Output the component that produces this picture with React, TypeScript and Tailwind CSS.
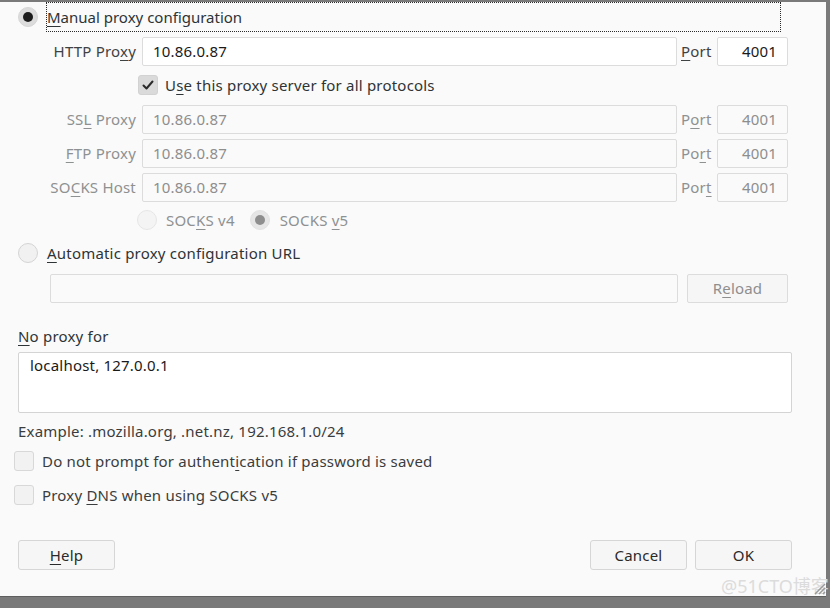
import React from "react";

const U = ({ children }: { children: React.ReactNode }) => (
  <span className="underline underline-offset-[3px] decoration-1">{children}</span>
);

type RadioProps = { checked?: boolean; disabled?: boolean };

const Radio = ({ checked, disabled }: RadioProps) => (
  <span
    className={`flex h-5 w-5 shrink-0 items-center justify-center rounded-full border ${
      checked
        ? disabled
          ? "border-[#e2e2e2] bg-[#e6e6e6]"
          : "border-[#d6d6d6] bg-[#dcdcdc]"
        : disabled
          ? "border-[#e6e6e6] bg-[#f4f4f4]"
          : "border-[#d4d4d4] bg-[#f1f1f1]"
    }`}
  >
    {checked && (
      <span className={`h-[10px] w-[10px] rounded-full ${disabled ? "bg-[#8e8e8e]" : "bg-[#1c1c1c]"}`} />
    )}
  </span>
);

const Checkbox = ({ checked }: { checked?: boolean }) => (
  <span
    className={`flex h-5 w-5 shrink-0 items-center justify-center rounded-[3px] border ${
      checked ? "border-[#d2d2d2] bg-[#dadada]" : "border-[#d8d8d8] bg-[#f2f2f2]"
    }`}
  >
    {checked && (
      <svg width="12" height="12" viewBox="0 0 12 12" fill="none">
        <path d="M1.5 6.5l3 3 6-7" stroke="#2a2a2a" strokeWidth="2" strokeLinecap="round" strokeLinejoin="round" />
      </svg>
    )}
  </span>
);

type ProxyRowProps = { label: React.ReactNode; port: React.ReactNode; disabled?: boolean; mt: string };

const ProxyRow = ({ label, port, disabled, mt }: ProxyRowProps) => (
  <div className={`flex h-[29px] items-center ${mt}`}>
    <div className={`w-[119px] pb-[2px] pr-[1px] text-right ${disabled ? "text-[#8e9192]" : "text-[#3f4243]"}`}>
      {label}
    </div>
    <div
      className={`ml-[5px] flex h-[29px] w-[535px] items-center rounded-[2px] border border-[#dcdcdc] pb-[2px] pl-[10px] ${
        disabled ? "bg-[#fafafa] text-[#8e8e8e]" : "bg-white text-[#1a1a1a]"
      }`}
    >
      10.86.0.87
    </div>
    <div className={`ml-[4px] w-[36px] pb-[2px] ${disabled ? "text-[#8e9192]" : "text-[#3f4243]"}`}>{port}</div>
    <div
      className={`flex h-[29px] w-[71px] items-center justify-end rounded-[2px] border border-[#dcdcdc] pb-[2px] pr-[10px] ${
        disabled ? "bg-[#fafafa] text-[#8e8e8e]" : "bg-white text-[#1a1a1a]"
      }`}
    >
      4001
    </div>
  </div>
);

const Button = ({ children }: { children: React.ReactNode }) => (
  <div className="flex h-[30px] items-center justify-center rounded-[3px] border border-[#d6d6d6] bg-[#f6f6f6] pb-[1px] text-[#2a2a2a]">
    {children}
  </div>
);

export default function App() {
  return (
    <div className="relative h-[608px] w-[830px] overflow-hidden bg-[#7a7a7a] font-['Noto_Sans',sans-serif] text-[15px] leading-5 tracking-[0.2px]">
      <div className="h-[595px] w-[826px] border-b border-[#5e5e5e] bg-[#fafafa] pl-[18px]">
        <div className="mt-[2px] flex h-[30px] items-center">
          <Radio checked />
          <div className="ml-[8px] flex h-[30px] w-[735px] items-center border border-dotted border-[#2a2a2a] pb-[1px] text-[#2e3436] tracking-normal">
            <U>M</U>anual proxy configuration
          </div>
        </div>

        <ProxyRow
          mt="mt-[5px]"
          label={
            <>
              HTTP Pro<U>x</U>y
            </>
          }
          port={
            <>
              <U>P</U>ort
            </>
          }
        />

        <div className="ml-[120px] mt-[9px] flex h-5 items-center text-[#2e3436]">
          <Checkbox checked />
          <span className="ml-[7px]">
            U<U>s</U>e this proxy server for all protocols
          </span>
        </div>

        <ProxyRow
          disabled
          mt="mt-[10px]"
          label={
            <>
              SS<U>L</U> Proxy
            </>
          }
          port={
            <>
              P<U>o</U>rt
            </>
          }
        />
        <ProxyRow
          disabled
          mt="mt-[5px]"
          label={
            <>
              <U>F</U>TP Proxy
            </>
          }
          port={
            <>
              Po<U>r</U>t
            </>
          }
        />
        <ProxyRow
          disabled
          mt="mt-[5px]"
          label={
            <>
              SO<U>C</U>KS Host
            </>
          }
          port={
            <>
              Por<U>t</U>
            </>
          }
        />

        <div className="ml-[119px] mt-[8px] flex h-5 items-center text-[#8e9192]">
          <Radio disabled />
          <span className="ml-[9px]">
            SOC<U>K</U>S v4
          </span>
          <span className="ml-[15px]">
            <Radio checked disabled />
          </span>
          <span className="ml-[10px]">
            SOCKS <U>v</U>5
          </span>
        </div>

        <div className="mt-[13px] flex h-5 items-center text-[#2e3436]">
          <Radio />
          <span className="ml-[9px]">
            <U>A</U>utomatic proxy configuration URL
          </span>
        </div>

        <div className="ml-[32px] mt-[11px] flex h-[29px] items-center">
          <div className="h-[29px] w-[628px] rounded-[2px] border border-[#dcdcdc] bg-[#fafafa]" />
          <div className="ml-[9px] w-[101px]">
            <div className="flex h-[29px] items-center justify-center rounded-[2px] border border-[#dcdcdc] bg-[#f6f6f6] pb-[1px] text-[#8e8e8e]">
              R<U>e</U>load
            </div>
          </div>
        </div>

        <div className="mt-[23px] flex h-5 items-center text-[#2e3436]">
          <span>
            <U>N</U>o proxy for
          </span>
        </div>

        <div className="mt-[6px] h-[61px] w-[774px] rounded-[2px] border border-[#d4d4d4] bg-white pl-[11px] pt-[2px] text-[#1a1a1a]">
          localhost, 127.0.0.1
        </div>

        <div className="mt-[8px] flex h-5 items-center text-[#3a3d3e]">Example: .mozilla.org, .net.nz, 192.168.1.0/24</div>

        <div className="-ml-[4px] mt-[10px] flex h-5 items-center text-[#3a3d3e]">
          <Checkbox />
          <span className="ml-[8px]">
            Do not prompt for authent<U>i</U>cation if password is saved
          </span>
        </div>

        <div className="-ml-[4px] mt-[14px] flex h-5 items-center text-[#3a3d3e]">
          <Checkbox />
          <span className="ml-[8px]">
            Proxy <U>D</U>NS when using SOCKS v5
          </span>
        </div>

        <div className="mt-[35px] flex w-[774px] items-center">
          <div className="w-[97px]">
            <Button>
              <U>H</U>elp
            </Button>
          </div>
          <div className="flex-1" />
          <div className="w-[97px]">
            <Button>Cancel</Button>
          </div>
          <div className="ml-[8px] w-[97px]">
            <Button>OK</Button>
          </div>
        </div>
      </div>

      <div className="absolute left-[721px] top-[576px] font-['Noto_Sans','Noto_Sans_CJK_SC',sans-serif] text-[18px] leading-5 tracking-normal text-[#dcdcdc]">
        @51CTO博客
      </div>
      <svg className="absolute left-[812px] top-[581px]" width="14" height="14" viewBox="0 0 14 14">
        <path d="M13 3L3 13M13 7L7 13M13 11L11 13" stroke="#9a9a9a" strokeWidth="1.5" />
      </svg>
    </div>
  );
}
